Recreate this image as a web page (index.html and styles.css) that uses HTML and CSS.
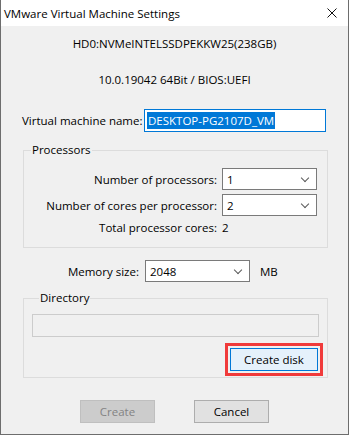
FILE: index.html
```html
<!DOCTYPE html>
<html lang="en">
<head>
    <meta charset="UTF-8">
    <title>VMware Virtual Machine Settings</title>
    <link rel="stylesheet" href="styles.css">
</head>
<body>

<div class="window">
    <div class="titlebar">
        <span class="title">VMware Virtual Machine Settings</span>
        <svg class="close" width="10" height="10" viewBox="0 0 10 10">
            <path d="M0.5 0.5 L9.5 9.5 M9.5 0.5 L0.5 9.5" stroke="#111" stroke-width="1"/>
        </svg>
    </div>

    <div class="content">
        <div class="info first">HD0:NVMeINTELSSDPEKKW25(238GB)</div>
        <div class="info second">10.0.19042 64Bit / BIOS:UEFI</div>

        <div class="name-row">
            <span class="label">Virtual machine name:</span>
            <div class="textbox active"><span class="selected">DESKTOP-PG2107D_VM</span></div>
        </div>

        <fieldset class="group processors">
            <legend>Processors</legend>
            <div class="proc-row">
                <span class="proc-label">Number of processors:</span>
                <div class="combo small"><span>1</span><i class="chevron"></i></div>
            </div>
            <div class="proc-row">
                <span class="proc-label">Number of cores per processor:</span>
                <div class="combo small"><span>2</span><i class="chevron"></i></div>
            </div>
            <div class="proc-row total">
                <span class="proc-label">Total processor cores:</span>
                <span class="total-value">2</span>
            </div>
        </fieldset>

        <div class="memory-row">
            <span class="label">Memory size:</span>
            <div class="combo memory"><span>2048</span><i class="chevron"></i></div>
            <span class="unit">MB</span>
        </div>

        <fieldset class="group directory">
            <legend>Directory</legend>
            <div class="textbox path"></div>
            <div class="disk-row">
                <div class="highlight">
                    <button class="btn focused">Create disk</button>
                </div>
            </div>
        </fieldset>

        <div class="actions">
            <button class="btn disabled">Create</button>
            <button class="btn">Cancel</button>
        </div>
    </div>
</div>

</body>
</html>
```

FILE: styles.css
```css
/* Windows 10 style dialog */
body {
    margin: 0;
    font-family: "Open Sans", "Noto Sans", sans-serif;
    font-size: 11.5px;
    color: #000000;
    background: #f0f0f0;
}
.window {
    width: 349px;
    height: 435px;
    box-sizing: border-box;
    border: 1px solid #6d6d6d;
    border-top: none;
    display: flex;
    flex-direction: column;
}
.titlebar {
    height: 26px;
    background: #ffffff;
    display: flex;
    align-items: center;
    justify-content: space-between;
    padding: 0 11px 0 3px;
    flex-shrink: 0;
}
.close {
    margin-top: -1px;
}
.content {
    flex: 1;
    background: #f0f0f0;
    display: flex;
    flex-direction: column;
    padding: 0 21px;
    white-space: nowrap;
}
.info {
    text-align: center;
    line-height: 16px;
}
.info.first {
    margin-top: 10px;
}
.info.second {
    margin-top: 20px;
}
.name-row {
    display: flex;
    align-items: center;
    margin-top: 21px;
    height: 23px;
}
.name-row .label {
    width: 122px;
}
.textbox {
    box-sizing: border-box;
    height: 23px;
    background: #ffffff;
    border: 1px solid #7a7a7a;
}
.textbox.active {
    width: 182px;
    border-color: #0078d7;
    padding: 2px 2px;
}
.selected {
    display: inline-block;
    background: #0078d7;
    color: #ffffff;
    line-height: 17px;
    padding: 0 1px;
}
.group {
    margin: 10px 0 0 1px;
    width: 305px;
    box-sizing: border-box;
    border: 1px solid #dcdcdc;
    padding: 0;
}
.group legend {
    padding: 0 1px;
    margin-left: 7px;
    line-height: 16px;
}
.processors {
    padding: 10px 10px 12px 0;
}
.proc-row {
    display: flex;
    align-items: center;
    height: 22px;
    margin-bottom: 4px;
}
.proc-row.total {
    height: 16px;
    margin: -1px 0 0;
}
.proc-label {
    width: 193px;
    text-align: right;
    margin-right: 5px;
}
.combo {
    box-sizing: border-box;
    height: 22px;
    background: #ffffff;
    border: 1px solid #7a7a7a;
    display: flex;
    align-items: center;
    justify-content: space-between;
    padding: 0 8px 0 4px;
}
.combo.small {
    width: 95px;
}
.chevron {
    width: 5px;
    height: 5px;
    border-right: 1px solid #5a5a5a;
    border-bottom: 1px solid #5a5a5a;
    transform: rotate(45deg);
    margin-top: -3px;
}
.total-value {
    margin-left: 0;
}
.memory-row {
    display: flex;
    align-items: center;
    margin-top: 12px;
    height: 22px;
}
.memory-row .label {
    width: 117px;
    text-align: right;
    margin-right: 6px;
}
.combo.memory {
    width: 105px;
}
.unit {
    margin-left: 10px;
}
.directory {
    margin-top: 8px;
    padding: 0 8px 0 8px;
}
.textbox.path {
    width: 287px;
    margin-top: 8px;
    border-color: #cccccc;
    background: #f0f0f0;
}
.disk-row {
    display: flex;
    justify-content: flex-end;
    margin: 6px -4px 1px 0;
}
.highlight {
    border: 3px solid #f03a3a;
    padding: 2px;
}
.btn {
    box-sizing: border-box;
    width: 75px;
    height: 23px;
    font-family: inherit;
    font-size: 11.5px;
    color: #000000;
    background: #e1e1e1;
    border: 1px solid #adadad;
    padding: 0;
}
.btn.focused {
    width: 88px;
    background: #e5f1fb;
    border: 1px solid #0078d7;
}
.btn.disabled {
    background: #cccccc;
    border-color: #bfbfbf;
    color: #838383;
}
.actions {
    display: flex;
    justify-content: center;
    gap: 39px;
    margin-top: 22px;
}
```
